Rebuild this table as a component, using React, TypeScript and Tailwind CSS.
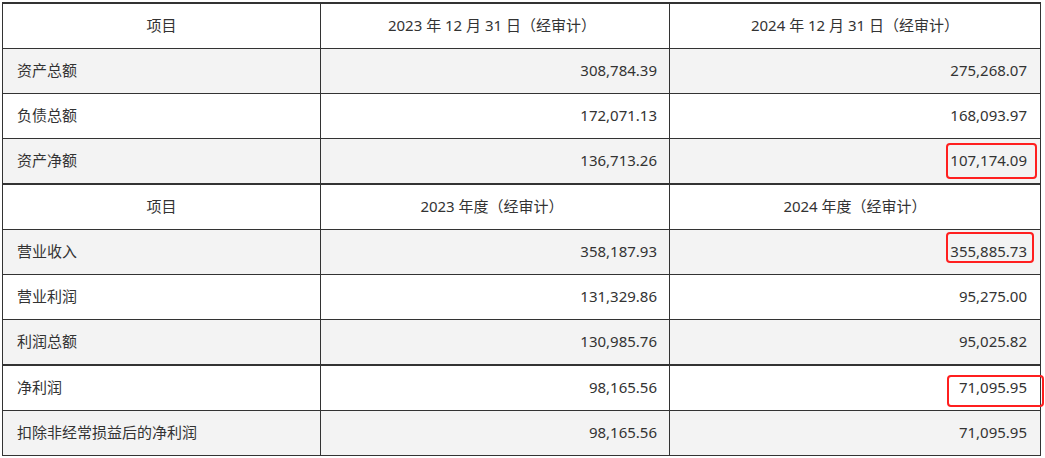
const font = { fontFamily: '"Noto Sans", "Noto Sans CJK SC", sans-serif' };

type Row = {
  label: string;
  a: string;
  b: string;
  header?: boolean;
  thick?: boolean;
  mark?: "big" | "mid" | "wide";
};

const rows: Row[] = [
  { label: "项目", a: "2023 年 12 月 31 日（经审计）", b: "2024 年 12 月 31 日（经审计）", header: true },
  { label: "资产总额", a: "308,784.39", b: "275,268.07" },
  { label: "负债总额", a: "172,071.13", b: "168,093.97" },
  { label: "资产净额", a: "136,713.26", b: "107,174.09", thick: true, mark: "big" },
  { label: "项目", a: "2023 年度（经审计）", b: "2024 年度（经审计）", header: true },
  { label: "营业收入", a: "358,187.93", b: "355,885.73", mark: "mid" },
  { label: "营业利润", a: "131,329.86", b: "95,275.00" },
  { label: "利润总额", a: "130,985.76", b: "95,025.82", thick: true },
  { label: "净利润", a: "98,165.56", b: "71,095.95", mark: "wide" },
  { label: "扣除非经常损益后的净利润", a: "98,165.56", b: "71,095.95" },
];

// red annotation boxes drawn over the 2024 column
const markClass = {
  big: "left-[276px] top-[4px] w-[91px] h-[36px]",
  mid: "left-[276px] top-[2px] w-[88px] h-[31px]",
  wide: "left-[277px] top-[9px] w-[97px] h-[32px]",
};

export default function App() {
  return (
    <div className="min-h-screen bg-white pt-[2px] pl-[2px]" style={font}>
      <div className="w-[1039px] border-x border-t-2 border-[#333] text-[15px] text-[#333]">
        {rows.map((r, i) => (
          <div
            key={i}
            className={`grid grid-cols-[318px_349px_370px] border-[#333] ${
              r.thick ? "h-[46px] border-b-2" : "h-[45px] border-b"
            } ${i % 2 === 1 ? "bg-[#f3f3f3]" : "bg-white"}`}
          >
            <div
              className={`flex items-center border-r border-[#333] pb-[2px] ${
                r.header ? "justify-center" : "pl-[14px]"
              }`}
            >
              {r.label}
            </div>
            <div
              className={`flex items-center border-r border-[#333] pb-[2px] ${
                r.header ? "justify-center pr-[6px]" : "justify-end pr-[12px]"
              }`}
            >
              {r.a}
            </div>
            <div
              className={`relative flex items-center pb-[2px] ${
                r.header ? "justify-center" : "justify-end pr-[13px]"
              }`}
            >
              {r.b}
              {r.mark && (
                <span
                  className={`pointer-events-none absolute rounded-[4px] border-2 border-[#ff1f1f] ${markClass[r.mark]}`}
                />
              )}
            </div>
          </div>
        ))}
      </div>
    </div>
  );
}
